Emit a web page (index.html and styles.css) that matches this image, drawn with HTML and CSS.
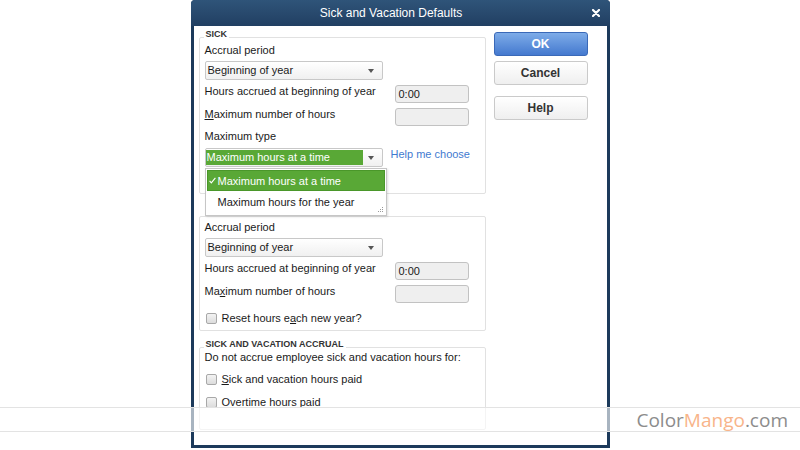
FILE: index.html
```html
<!DOCTYPE html>
<html lang="en">
<head>
  <meta charset="UTF-8">
  <title>Sick and Vacation Defaults</title>
  <link rel="stylesheet" href="styles.css">
</head>
<body>
  <div class="desk">
    <div class="dialog">
      <div class="titlebar">
        <span class="title">Sick and Vacation Defaults</span>
        <svg class="close" width="8" height="8" viewBox="0 0 8 8">
          <path d="M1 1 L7 7 M7 1 L1 7" stroke="#fff" stroke-width="2.2" stroke-linecap="round"/>
        </svg>
      </div>

      <div class="dialog-body">
        <div class="groups">
          <fieldset class="group sick">
            <legend>SICK</legend>
            <div class="label">Accrual period</div>
            <div class="select"><span>Beginning of year</span><i class="arrow"></i></div>
            <div class="field-row">
              <span class="label">Hours accrued at beginning of year</span>
              <div class="input">0:00</div>
            </div>
            <div class="field-row">
              <span class="label"><u>M</u>aximum number of hours</span>
              <div class="input"></div>
            </div>
            <div class="label type-label">Maximum type</div>
            <div class="type-row">
              <div class="select active"><span>Maximum hours at a time</span><i class="arrow"></i></div>
              <a class="help-link" href="#">Help me choose</a>

              <ul class="dropdown">
                <li class="selected">
                  <svg class="tick" width="7" height="7" viewBox="0 0 7 7">
                    <path d="M0.6 3.9 L2.3 5.8 L6.4 0.8" fill="none" stroke="#fff" stroke-width="1.1"/>
                  </svg>
                  <span>Maximum hours at a time</span>
                </li>
                <li>
                  <svg class="tick" width="7" height="7" viewBox="0 0 7 7"></svg>
                  <span>Maximum hours for the year</span>
                </li>
                <svg class="grip" width="7" height="7" viewBox="0 0 7 7">
                  <rect x="5" y="1" width="1" height="1" fill="#9a9a9a"/>
                  <rect x="3" y="3" width="1" height="1" fill="#9a9a9a"/>
                  <rect x="5" y="3" width="1" height="1" fill="#9a9a9a"/>
                  <rect x="1" y="5" width="1" height="1" fill="#9a9a9a"/>
                  <rect x="3" y="5" width="1" height="1" fill="#9a9a9a"/>
                  <rect x="5" y="5" width="1" height="1" fill="#9a9a9a"/>
                </svg>
              </ul>
            </div>
          </fieldset>

          <fieldset class="group vacation">
            <div class="label">Accrual period</div>
            <div class="select"><span>Beginning of year</span><i class="arrow"></i></div>
            <div class="field-row">
              <span class="label">Hours accrued at beginning of year</span>
              <div class="input">0:00</div>
            </div>
            <div class="field-row">
              <span class="label">Ma<u>x</u>imum number of hours</span>
              <div class="input"></div>
            </div>
            <label class="check-row reset">
              <span class="check"></span><span>Reset hours e<u>a</u>ch new year?</span>
            </label>
          </fieldset>

          <fieldset class="group accrual">
            <legend>SICK AND VACATION ACCRUAL</legend>
            <div class="label intro">Do not accrue employee sick and vacation hours for:</div>
            <label class="check-row">
              <span class="check"></span><span><u>S</u>ick and vacation hours paid</span>
            </label>
            <label class="check-row">
              <span class="check"></span><span><u>O</u>vertime hours paid</span>
            </label>
          </fieldset>
        </div>

        <div class="buttons">
          <button class="btn primary">OK</button>
          <button class="btn">Cancel</button>
          <button class="btn help">Help</button>
        </div>
      </div>
    </div>

    <div class="watermark">
      <span class="wm-gray">Color</span><span class="wm-orange">Mango</span><span class="wm-gray">.com</span>
    </div>
  </div>
</body>
</html>
```

FILE: styles.css
```css
body {
  margin: 0;
  background-color: #fff;
  font-family: "Liberation Sans", Arial, sans-serif;
  font-size: 11px;
  color: #1a1a1a;
}

.desk {
  position: relative;
  width: 800px;
  height: 450px;
  overflow: hidden;
}

/* window */
.dialog {
  width: 419px;
  height: 448px;
  margin: 0 auto;
  background-color: #1c3a5b;
  border-radius: 4px 4px 0 0;
  display: flex;
  flex-direction: column;
}

.titlebar {
  height: 26px;
  display: flex;
  align-items: center;
  padding-right: 10px;
  background: linear-gradient(#2f5479, #213f62);
  border-radius: 4px 4px 0 0;
}
.title {
  flex: 1;
  text-align: center;
  color: #fff;
  font-size: 12px;
}
.close {
  display: block;
}

.dialog-body {
  flex: 1;
  margin: 0 3px 3px;
  background-color: #fff;
  display: flex;
  gap: 8px;
  padding: 4px 0 0 5px;
}

.groups {
  width: 287px;
}

/* group boxes */
.group {
  margin: 0;
  padding: 0 5px;
  border: 1px solid #e1e1e1;
  border-radius: 2px;
}
.group legend {
  margin-left: -1px;
  padding: 0 2px 5px;
  font-size: 9px;
  line-height: 9px;
  font-weight: bold;
  color: #333;
}
.sick {
  padding-bottom: 26px;
}
.vacation {
  margin-top: 22px;
  padding-top: 3px;
  padding-bottom: 5px;
}
.accrual {
  margin-top: 9px;
  padding-bottom: 20px;
}

.label {
  line-height: 13px;
  white-space: nowrap;
}
.vacation > .label:first-child {
  line-height: 14px;
}
.type-label {
  margin-top: 4px;
}
.intro {
  margin-top: -3px;
}

/* dropdowns */
.select {
  width: 178px;
  height: 19px;
  box-sizing: border-box;
  margin-top: 4px;
  border: 1px solid #c8c8c8;
  border-radius: 2px;
  background: linear-gradient(#fff, #f0f0f0);
  display: flex;
  align-items: center;
}
.select span {
  flex: 1;
  padding-left: 2px;
  line-height: 17px;
}
.arrow {
  width: 0;
  height: 0;
  margin: 0 8px 0 5px;
  border-left: 3.5px solid transparent;
  border-right: 3.5px solid transparent;
  border-top: 4px solid #555;
}
.select.active span {
  align-self: stretch;
  margin: 1px 0;
  padding-left: 1px;
  line-height: 15px;
  background-color: #59a836;
  color: #fff;
}

.field-row {
  display: grid;
  grid-template-columns: 190px 74px;
  align-items: start;
  margin-top: 5px;
}
.input {
  height: 18px;
  box-sizing: border-box;
  border: 1px solid #c2c2c2;
  border-radius: 3px;
  background-color: #efefef;
  padding-left: 3px;
  line-height: 16px;
}

.type-row {
  position: relative;
  display: flex;
  align-items: flex-start;
  margin-top: 5px;
}
.type-row .select {
  margin-top: 0;
}
.help-link {
  margin-left: 8px;
  line-height: 13px;
  color: #3f7ad0;
  text-decoration: none;
}

.dropdown {
  position: absolute;
  top: 20px;
  left: 0;
  width: 182px;
  height: 48px;
  box-sizing: border-box;
  margin: 0;
  padding: 1px;
  list-style: none;
  background-color: #fff;
  border: 1px solid #c6c6c6;
  box-shadow: 1px 1px 2px rgba(0, 0, 0, 0.12);
}
.dropdown li {
  display: flex;
  align-items: center;
  gap: 2px;
  height: 21px;
  box-sizing: border-box;
  padding-left: 1px;
  border: 1px solid transparent;
}
.dropdown li.selected {
  background-color: #59a836;
  border-color: #4a972a;
  color: #fff;
}
.tick {
  display: block;
}
.grip {
  position: absolute;
  right: 2px;
  bottom: 2px;
}

/* checkboxes */
.check-row {
  display: flex;
  align-items: center;
  gap: 5px;
  padding-left: 1px;
  line-height: 14px;
  margin-top: 8px;
}
.accrual .check-row + .check-row {
  margin-top: 9px;
}
.check {
  width: 11px;
  height: 11px;
  box-sizing: border-box;
  border: 1px solid #a8a8a8;
  border-radius: 2px;
  background: linear-gradient(#f3f3f3, #dcdcdc);
}

/* buttons */
.buttons {
  width: 94px;
  padding-top: 2px;
  display: flex;
  flex-direction: column;
  gap: 5px;
}
.btn {
  height: 24px;
  padding: 0;
  border: 1px solid #cacaca;
  border-radius: 3px;
  background: linear-gradient(#fff, #efefef);
  font-family: "Liberation Sans", Arial, sans-serif;
  font-size: 12px;
  font-weight: bold;
  color: #333;
}
.btn.primary {
  background: linear-gradient(#7eace8, #4479cf);
  border-color: #3a69b8;
  color: #fff;
}
.btn.help {
  margin-top: 6px;
}

/* watermark band */
.watermark {
  position: absolute;
  left: 0;
  right: 0;
  top: 407px;
  height: 23px;
  border-top: 1px solid #e3e3e3;
  border-bottom: 1px solid #e3e3e3;
  background-color: rgba(255, 255, 255, 0.62);
  display: flex;
  justify-content: flex-end;
  align-items: center;
  padding-right: 12px;
  font-family: "Open Sans", sans-serif;
  font-size: 19px;
}
.wm-gray {
  color: #8c8c8c;
}
.wm-orange {
  color: #f8b48a;
}
```
